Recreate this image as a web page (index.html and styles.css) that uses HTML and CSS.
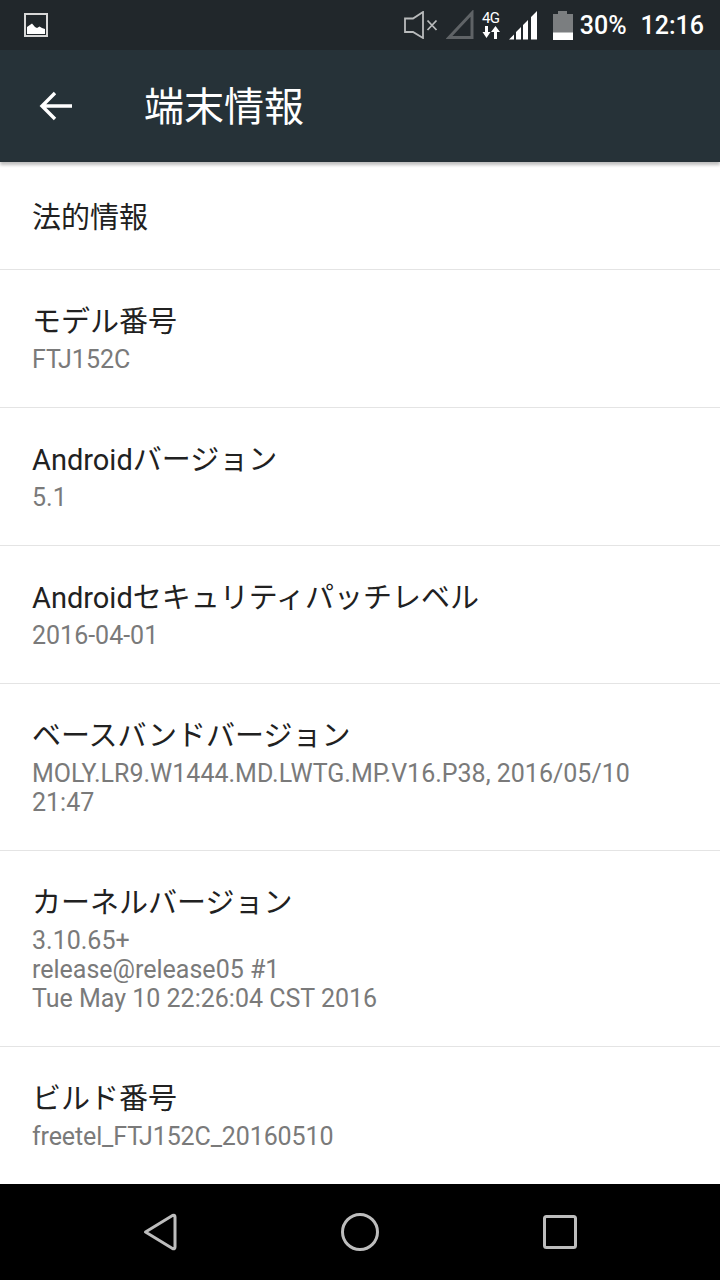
FILE: index.html
```html
<!DOCTYPE html>
<html lang="ja">
<head>
    <meta charset="UTF-8">
    <meta name="viewport" content="width=device-width, initial-scale=1.0">
    <title>端末情報</title>

    <link rel="stylesheet" href="styles.css">
</head>
<body>
    <div id="screen">
        <!-- status bar -->
        <div class="statusBar">
            <svg class="picIcon" width="24" height="24" viewBox="0 0 24 24">
                <rect x="1" y="1" width="22" height="22" fill="none" stroke="#d8d8d8" stroke-width="2"/>
                <path d="M3 21V14L8 10.500L11 14L13 15L15.500 13.500L18 15L21 16V21Z" fill="#fff"/>
            </svg>
            <div class="statusRight">
                <svg class="muteIcon" width="34" height="28" viewBox="0 0 34 28">
                    <path d="M1 7.500H9L19 1V27L9 21H1Z" fill="none" stroke="#b9bbbc" stroke-width="1.800"/>
                    <path d="M23.500 9.500L32.500 19M32.500 9.500L23.500 19" stroke="#b9bbbc" stroke-width="1.800"/>
                </svg>
                <svg class="simIcon" width="28" height="30" viewBox="0 0 28 30">
                    <path d="M3 27.500L26 3V27.500Z" fill="none" stroke="#5f6366" stroke-width="3"/>
                </svg>
                <div class="netIcon">
                    <span class="netLabel">4G</span>
                    <svg width="18" height="13" viewBox="0 0 18 13">
                        <path d="M3 0H6V6H8.500L4.500 12L0.500 6H3Z" fill="#fff"/>
                        <path d="M12 13H15V6H18L13.500 0L9 6H12Z" fill="#fff"/>
                    </svg>
                </div>
                <svg class="signalIcon" width="29" height="29" viewBox="0 0 29 29">
                    <path d="M1 28.500L6 23.500V28.500Z M8 28.500V21L13 16V28.500Z M15 28.500V14L20 9V28.500Z M23 28.500V6L29 0V28.500Z" fill="#fff"/>
                </svg>
                <svg class="batteryIcon" width="20" height="29" viewBox="0 0 20 29">
                    <path d="M5 0H14V3H20V29H0V3H5Z" fill="#7b7e80"/>
                    <path d="M0 21.500H20V29H0Z" fill="#fff"/>
                </svg>
                <span class="batteryText">30%</span>
                <span class="clock">12:16</span>
            </div>
        </div>

        <!-- toolbar -->
        <div class="toolBar">
            <svg class="backIcon" width="34" height="30" viewBox="0 0 34 30">
                <path d="M33 15H3M16 2L3 15L16 28" fill="none" stroke="#fff" stroke-width="3.400"/>
            </svg>
            <h1>端末情報</h1>
        </div>

        <!-- list -->
        <ul class="infoList">
            <li class="firstRow"><div class="rowTitle">法的情報</div></li>
            <li>
                <div class="rowTitle">モデル番号</div>
                <div class="rowSub">FTJ152C</div>
            </li>
            <li>
                <div class="rowTitle">Androidバージョン</div>
                <div class="rowSub">5.1</div>
            </li>
            <li>
                <div class="rowTitle">Androidセキュリティパッチレベル</div>
                <div class="rowSub">2016-04-01</div>
            </li>
            <li>
                <div class="rowTitle">ベースバンドバージョン</div>
                <div class="rowSub">MOLY.LR9.W1444.MD.LWTG.MP.V16.P38, 2016/05/10 21:47</div>
            </li>
            <li>
                <div class="rowTitle">カーネルバージョン</div>
                <div class="rowSub">3.10.65+<br>release@release05 #1<br>Tue May 10 22:26:04 CST 2016</div>
            </li>
            <li class="lastRow">
                <div class="rowTitle">ビルド番号</div>
                <div class="rowSub buildSub">freetel_FTJ152C_20160510</div>
            </li>
        </ul>

        <!-- nav bar -->
        <div class="navBar">
            <svg width="34" height="38" viewBox="0 0 34 38">
                <path d="M2.500 19L29.500 2.500Q32 1.500 32 4V34Q32 36.500 29.500 35.500Z" fill="none" stroke="#bdbdbd" stroke-width="3" stroke-linejoin="round"/>
            </svg>
            <svg width="38" height="38" viewBox="0 0 38 38">
                <circle cx="19" cy="19" r="17.500" fill="none" stroke="#bdbdbd" stroke-width="3"/>
            </svg>
            <svg width="34" height="34" viewBox="0 0 34 34">
                <rect x="1.500" y="1.500" width="31" height="31" rx="2" fill="none" stroke="#bdbdbd" stroke-width="3"/>
            </svg>
        </div>
    </div>
</body>
</html>
```
FILE: styles.css
```css
* {
    box-sizing: border-box;
}

body {
    margin: 0;
    font-family: Roboto, "Noto Sans CJK JP", sans-serif;
    background-color: white;
}

#screen {
    width: 720px;
    height: 1280px;
    display: flex;
    flex-direction: column;
    overflow: hidden;
}

.statusBar {
    height: 50px;
    background-color: #21272b;
    display: flex;
    justify-content: space-between;
    align-items: center;
    padding: 0 16px 0 24px;
    color: white;
}

.statusRight {
    display: flex;
    align-items: center;
}

.muteIcon {
    margin-right: 8px;
}

.simIcon {
    margin-right: 8px;
}

.netIcon {
    width: 18px;
    display: flex;
    flex-direction: column;
    align-items: center;
    margin-right: 8px;
}

.netLabel {
    font-size: 15px;
    line-height: 15px;
    letter-spacing: -0.5px;
}

.signalIcon {
    margin-right: 16px;
}

.batteryIcon {
    margin-right: 7px;
}

.batteryText {
    font-size: 25px;
    font-weight: 500;
    margin-right: 14px;
}

.clock {
    font-size: 25px;
    font-weight: 500;
}

.toolBar {
    height: 112px;
    background-color: #263238;
    display: flex;
    align-items: center;
    padding-left: 39px;
    box-shadow: 0 3px 3px rgba(0,0,0,0.25);
    position: relative;
}

.toolBar h1 {
    margin: 0 0 4px 71px;
    font-size: 40px;
    font-weight: 400;
    color: white;
}

.infoList {
    list-style: none;
    margin: 0;
    padding: 0;
    flex: 1;
}

.infoList li {
    padding: 31px 32px 33px;
    border-bottom: 1px solid #e4e4e4;
}

.infoList .firstRow {
    height: 108px;
    padding-top: 35px;
}

.infoList .lastRow {
    border-bottom: none;
}

.rowTitle {
    font-size: 29px;
    line-height: 43px;
    margin-bottom: 1px;
    color: #212121;
}

.rowSub {
    font-size: 25px;
    line-height: 29px;
    color: #7a7a7a;
}

.buildSub {
    letter-spacing: -0.12px;
}

.navBar {
    height: 96px;
    background-color: black;
    display: flex;
    align-items: center;
    justify-content: space-between;
    padding: 0 143px;
}
```
